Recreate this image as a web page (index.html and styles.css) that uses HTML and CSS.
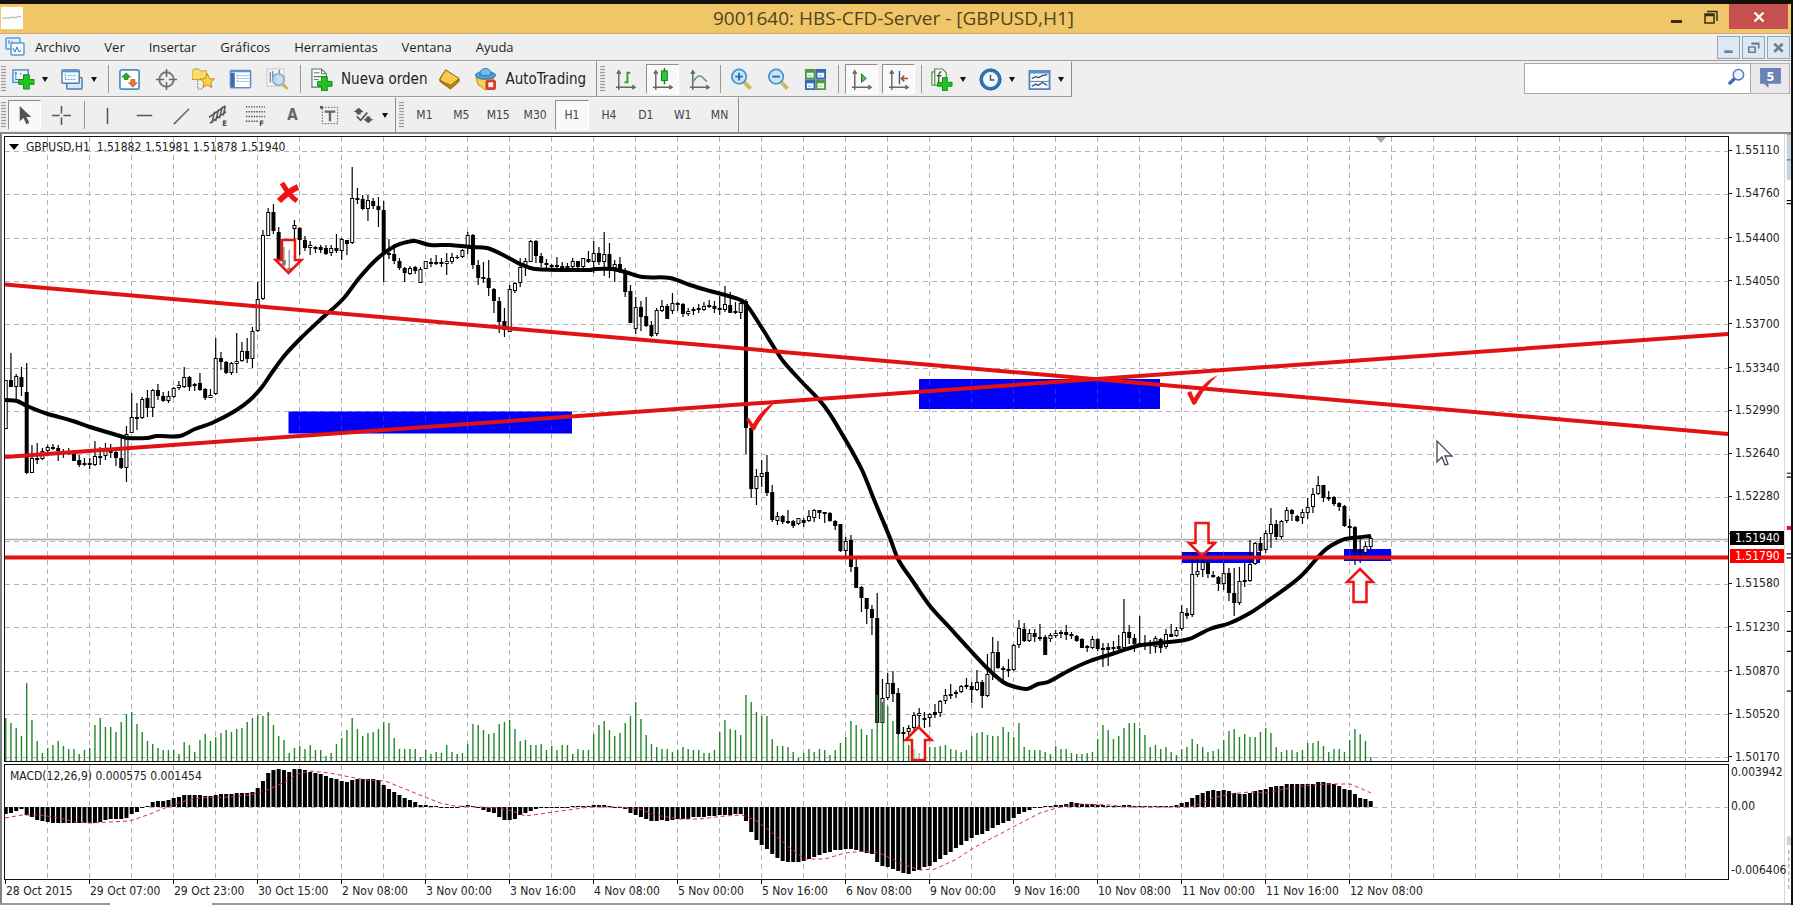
FILE: index.html
```html
<!DOCTYPE html>
<html lang="es">
<head>
<meta charset="utf-8">
<title>9001640: HBS-CFD-Server - [GBPUSD,H1]</title>
<link rel="stylesheet" href="styles.css">
</head>
<body>
<div class="window">
  <header class="titlebar">
    <span class="app-icon"><svg viewBox="0 0 22 22"><path d="M1 11h8l4-1 2 1 2-2 3 1" fill="none" stroke="#9aa" stroke-width="1"/></svg></span>
    <h1 class="title">9001640: HBS-CFD-Server - [GBPUSD,H1]</h1>
    <div class="win-controls">
      <button class="win-btn" aria-label="Minimizar"><svg width="12" height="22" viewBox="0 0 12 22"><path d="M0 15.5h11" stroke="#3a2c10" stroke-width="3"/></svg></button>
      <button class="win-btn" aria-label="Restaurar"><svg width="14" height="22" viewBox="0 0 14 22"><path d="M1 8h9v9H1zM1 9.500h9M3 5.500h10V15" fill="none" stroke="#3a2c10" stroke-width="1.500"/></svg></button>
      <button class="win-btn close" aria-label="Cerrar"><svg width="12" height="12" viewBox="0 0 12 12"><path d="M1.500 1.500l9 9M10.500 1.500l-9 9" stroke="#fff" stroke-width="2.200"/></svg></button>
    </div>
  </header>

  <nav class="menubar">
    <svg class="menu-icon" viewBox="0 0 20 20"><rect x="1" y="1" width="14" height="11" rx="1" fill="#e4f1fb" stroke="#5b9bd5" stroke-width="1.500"/><rect x="6" y="6" width="13" height="12" rx="1" fill="#f4faff" stroke="#5b9bd5" stroke-width="1.500"/><path d="M4 3v4M7 4v2M8 11l2 4 2-5 2 5 2-2" fill="none" stroke="#3c78b4"/></svg>
    <button>Archivo</button><button>Ver</button><button>Insertar</button><button>Gráficos</button><button>Herramientas</button><button>Ventana</button><button>Ayuda</button>
    <div class="mdi">
      <button aria-label="Minimizar gráfico"><svg viewBox="0 0 20 20"><path d="M6 14h8" stroke="#6c7f92" stroke-width="2.500"/></svg></button>
      <button aria-label="Restaurar gráfico"><svg viewBox="0 0 20 20"><path d="M5.500 9.500h6v5h-6zM8 6h7v5M5 9.500h7M8 6.500h7" fill="none" stroke="#6c7f92" stroke-width="1.600"/></svg></button>
      <button aria-label="Cerrar gráfico"><svg viewBox="0 0 20 20"><path d="M6 6.500l8 7.500M14 6.500l-8 7.500" stroke="#6c7f92" stroke-width="2.600"/></svg></button>
    </div>
  </nav>

  <div class="toolbar-row">
    <div class="toolbar">
      <span class="grip"></span>
      <button class="tb drop" aria-label="Nuevo gráfico"><svg viewBox="0 0 24 24"><rect x="1" y="2" width="16" height="13" fill="#eef7ff" stroke="#4a90c8" stroke-width="1.500"/><path d="M4 5v8M3 6l1-2 1 2M9 5v2M4 12h6" stroke="#4a7ea8" fill="none"/><path d="M12 7h6v5h5v5h-5v5h-6v-5H7v-5h5z" fill="#22c322" stroke="#0c8a14"/></svg></button>
      <button class="tb drop" aria-label="Perfiles"><svg viewBox="0 0 24 24"><rect x="6" y="10" width="16" height="12" rx="1" fill="#d5e8f8" stroke="#4a7fb0" stroke-width="1.500"/><rect x="1" y="2" width="18" height="14" rx="1" fill="#f4faff" stroke="#4a7fb0" stroke-width="1.500"/><path d="M1 3.500h18" stroke="#5b94c8" stroke-width="2"/><path d="M4.500 6v6M4 12h12M7 8h8" stroke="#6b9cc6" stroke-dasharray="2 1"/></svg></button>
      <span class="sep"></span>
      <button class="tb" aria-label="Observación del mercado"><svg viewBox="0 0 24 24"><rect x="2" y="2" width="20" height="20" rx="2" fill="#fff" stroke="#4a94c4" stroke-width="1.800"/><path d="M8.500 5l4.500 4.500h-2.500V12h-4V9.500H4z" fill="#22b422" stroke="#187818" stroke-width=".7"/><path d="M15.500 20L11 15.500h2.500V12h4v3.500H20z" fill="#f07830" stroke="#a84c18" stroke-width=".7"/></svg></button>
      <button class="tb" aria-label="Ventana de datos"><svg viewBox="0 0 24 24"><circle cx="12" cy="12" r="7.500" fill="none" stroke="#777" stroke-width="2"/><path d="M12 1v8.500M12 14.500V23M1 12h8.500M14.500 12H23" stroke="#666" stroke-width="1.600"/></svg></button>
      <button class="tb" aria-label="Navegador"><svg viewBox="0 0 24 24"><path d="M0 3l2-2h5l2 2h6v9H0z" fill="#f8dc70" stroke="#c49a28"/><path d="M6 13v9h5" fill="none" stroke="#555" stroke-dasharray="1.500 1.500"/><path d="M16 6l2.200 5 5.300.5-4 3.700 1.200 5.300-4.700-2.800-4.700 2.800 1.200-5.300-4-3.700 5.300-.5z" fill="#fbd24a" stroke="#b98a1c"/></svg></button>
      <button class="tb" aria-label="Terminal"><svg viewBox="0 0 24 24"><rect x="1.500" y="2.500" width="21" height="18" rx="1" fill="#fff" stroke="#5a90c8" stroke-width="1.600"/><path d="M1 3.500h22" stroke="#5a90c8" stroke-width="2"/><path d="M4 5v15" stroke="#3c6ca8" stroke-width="4"/><path d="M9 8h12M9 11h12M9 14h12" stroke="#a8c0dc"/><path d="M8.500 7v9" stroke="#345" stroke-dasharray="1 2"/></svg></button>
      <button class="tb" aria-label="Probador de estrategias"><svg viewBox="0 0 24 24"><rect x="1" y="1" width="18" height="18" fill="#f2f6fa" stroke="#a9b8c6" stroke-dasharray="3 1"/><path d="M4.500 4v11M7 3v7M10 6v8M14 2v6" stroke="#7d8a98" stroke-width="1.400"/><circle cx="13" cy="12" r="6" fill="#bcdcf4" fill-opacity=".85" stroke="#8cacc8" stroke-width="1.800"/><path d="M17.500 17l5 5" stroke="#d8b048" stroke-width="3"/></svg></button>
      <span class="sep wide"></span>
      <button class="tb text order"><svg viewBox="0 0 24 24"><path d="M2 1h10l5 5v14H2z" fill="#f8fbf8" stroke="#5a7a5a" stroke-width="1.200"/><path d="M12 1v5h5M4 5h6M4 9h9M4 12h5" fill="none" stroke="#777" stroke-width="1.200"/><path d="M12 9h6v5h5v5h-5v5h-6v-5H8v-5h4z" fill="#22c322" stroke="#0c8a14"/></svg>Nueva orden</button>
      <button class="tb" aria-label="MetaEditor"><svg viewBox="0 0 24 24"><path d="M8 2L22 11v3l-9 8L2 14v-3z" fill="#b97f14" stroke="#8c5c0c"/><path d="M8 2l14 9-9 7c-2-2-7-2-11-6z" fill="#f5cc52" stroke="#a06c14"/></svg></button>
      <button class="tb text auto"><svg viewBox="0 0 24 24"><path d="M2 9c4 4 15 4 19 0l-3 8-6 6-8-6z" fill="#f3cf52" stroke="#b98a1c"/><ellipse cx="12" cy="7.500" rx="10.500" ry="4" fill="#4ca0d8" stroke="#2c78ac"/><path d="M6 6.500c0-8 12-8 12 0-3 2-9 2-12 0z" fill="#74bce8" stroke="#2c78ac"/><rect x="12" y="12" width="11" height="11" rx="3" fill="#d04028"/><rect x="15" y="15" width="5" height="5" fill="#fff"/></svg>AutoTrading</button>
    </div>
    <div class="toolbar">
      <span class="grip"></span>
      <button class="tb" aria-label="Barras"><svg viewBox="0 0 24 24"><path d="M5 4v19M2 20h19M3 6l2-3 2 3M19 18l3 2-3 2" fill="none" stroke="#666" stroke-width="1.500"/><path d="M14 4v12M14 5h3M11 15h3" stroke="#28a032" stroke-width="2"/></svg></button>
      <button class="tb on" aria-label="Velas"><svg viewBox="0 0 24 24"><path d="M5 4v19M2 20h19M3 6l2-3 2 3M19 18l3 2-3 2" fill="none" stroke="#666" stroke-width="1.500"/><path d="M14 0v17" stroke="#187818" stroke-width="1.500"/><rect x="11" y="3" width="6" height="10" fill="#2cc83c" stroke="#187818"/></svg></button>
      <button class="tb" aria-label="Línea"><svg viewBox="0 0 24 24"><path d="M5 4v19M2 20h19M3 6l2-3 2 3M19 18l3 2-3 2" fill="none" stroke="#666" stroke-width="1.500"/><path d="M4 15c3-2 5-7 8-7s4 4 8 6" fill="none" stroke="#5c9c68" stroke-width="1.600"/></svg></button>
      <span class="sep"></span>
      <button class="tb" aria-label="Acercar"><svg viewBox="0 0 24 24"><path d="M15 15l6.500 6.500" stroke="#d0b860" stroke-width="4"/><circle cx="9.500" cy="9" r="7.500" fill="#c8e6fa" stroke="#4c94c8" stroke-width="1.800"/><path d="M5.500 9h8M9.500 5v8" stroke="#2870b0" stroke-width="2"/></svg></button>
      <button class="tb" aria-label="Alejar"><svg viewBox="0 0 24 24"><path d="M15 15l6.500 6.500" stroke="#d0b860" stroke-width="4"/><circle cx="9.500" cy="9" r="7.500" fill="#c8e6fa" stroke="#4c94c8" stroke-width="1.800"/><path d="M5.500 9h8" stroke="#2870b0" stroke-width="2"/></svg></button>
      <button class="tb" aria-label="Mosaico"><svg viewBox="0 0 24 24"><path d="M1 1h11v11H1zM12 12h11v11H12z" fill="#4c9c3c"/><path d="M12 1h11v11H12zM1 12h11v11H1z" fill="#3468b8"/><path d="M3 5h7v5H3zM14 5h7v5h-7zM3 16h7v5H3zM14 16h7v5h-7z" fill="#f2f7fb"/><path d="M4 8h4M15 8h4M4 19h4M15 19h4" stroke="#aac"/></svg></button>
      <span class="sep wide"></span>
      <button class="tb on" aria-label="Desplazamiento automático"><svg viewBox="0 0 24 24"><path d="M5 4v19M2 20h19M3 6l2-3 2 3M19 18l3 2-3 2" fill="none" stroke="#666" stroke-width="1.500"/><path d="M12 6l5 5-5 4z" fill="#4cc060" stroke="#187828"/></svg></button>
      <button class="tb on" aria-label="Margen del gráfico"><svg viewBox="0 0 24 24"><path d="M5 4v19M2 20h19M3 6l2-3 2 3M19 18l3 2-3 2" fill="none" stroke="#666" stroke-width="1.500"/><path d="M13 3v14" stroke="#2c5c98" stroke-width="1.500"/><path d="M22 11h-7M18 8l-3 3 3 3" fill="none" stroke="#a05038" stroke-width="1.600"/></svg></button>
      <span class="sep wide"></span>
      <button class="tb drop" aria-label="Indicadores"><svg viewBox="0 0 24 24"><path d="M5 1h8l4 4v13H5zM2 4h3M2 4v14h8" fill="#fafcfa" stroke="#4a8a4a" stroke-width="1.200"/><path d="M12 4c-3 0-3 3-3 12M7 8h5" fill="none" stroke="#555" stroke-width="1.500"/><path d="M13 10h5v5h5v4h-5v5h-5v-5H8v-4h5z" fill="#22c322" stroke="#0c8a14"/></svg></button>
      <button class="tb drop" aria-label="Periodicidad"><svg viewBox="0 0 24 24"><circle cx="12" cy="12" r="9.500" fill="#f4f9fd" stroke="#2c78b8" stroke-width="3.500"/><circle cx="12" cy="12" r="11" fill="none" stroke="#2c5c90" stroke-width="1"/><path d="M12 7v5.500h4" fill="none" stroke="#456" stroke-width="1.500"/></svg></button>
      <button class="tb drop last" aria-label="Plantillas"><svg viewBox="0 0 24 24"><rect x="1.500" y="3" width="21" height="19" fill="#f4f9fd" stroke="#4a80b8" stroke-width="1.800"/><path d="M1.500 4h21" stroke="#5c90c8" stroke-width="3.500"/><path d="M2 14h20" stroke="#4a80b8"/><path d="M4 11l4-2 3 1 4-2 5-1M4 19l4-2 3 1 4-3 5 3" fill="none" stroke="#445" stroke-width="1.300"/></svg></button>
    </div>
    <div class="search">
      <input type="text" aria-label="Buscar">
      <svg class="lens" viewBox="0 0 20 20"><circle cx="12" cy="7" r="5.500" fill="#eef4ff" stroke="#5c7cc0" stroke-width="1.600"/><path d="M8 11l-6 6" stroke="#4468b0" stroke-width="3.500"/></svg>
      <button class="chat" aria-label="Mensajes"><svg viewBox="0 0 24 24"><path d="M2 2h20v15H10v4l-4-4H2z" fill="#6c82b4"/><text x="12" y="14" text-anchor="middle" class="chat-num">5</text></svg></button>
    </div>
  </div>

  <div class="toolbar-row second">
    <div class="toolbar">
      <span class="grip"></span>
      <button class="tb on" aria-label="Cursor"><svg viewBox="0 0 24 24"><path d="M7 2v16l4-3.500 3 6.500 3-1.500-3-6h5z" fill="#555"/></svg></button>
      <button class="tb" aria-label="Cruz"><svg viewBox="0 0 24 24"><path d="M12 2v8M12 14v8M2 12h8M14 12h8" stroke="#555" stroke-width="1.600"/></svg></button>
      <span class="sep wide"></span>
      <button class="tb" aria-label="Línea vertical"><svg viewBox="0 0 24 24"><path d="M12 4v17" stroke="#555" stroke-width="1.600"/></svg></button>
      <button class="tb" aria-label="Línea horizontal"><svg viewBox="0 0 24 24"><path d="M4 12h16" stroke="#555" stroke-width="1.600"/></svg></button>
      <button class="tb" aria-label="Línea de tendencia"><svg viewBox="0 0 24 24"><path d="M4 21L20 5" stroke="#666" stroke-width="1.600"/></svg></button>
      <button class="tb" aria-label="Canal equidistante"><svg viewBox="0 0 24 24"><path d="M2 14L19 2M3 20L20 8M5 20l3-12M9 18l3-12M13 15l3-12M17 12l2-10" stroke="#555" stroke-width="1.600"/><text x="16" y="23" class="tag">E</text></svg></button>
      <button class="tb" aria-label="Fibonacci"><svg viewBox="0 0 24 24"><path d="M2 3h20M2 8h20M2 13h20M2 18h13" stroke="#555" stroke-width="1.500" stroke-dasharray="1.500 1.200"/><text x="16" y="23" class="tag">F</text></svg></button>
      <button class="tb letter" aria-label="Texto">A</button>
      <button class="tb" aria-label="Etiqueta"><svg viewBox="0 0 24 24"><rect x="4.500" y="3.500" width="16" height="17" fill="none" stroke="#555" stroke-dasharray="1.500 1.500"/><rect x="2" y="2" width="3" height="3" fill="#555"/><path d="M7 8h11M12.500 8v10" stroke="#666" stroke-width="2.400"/></svg></button>
      <button class="tb drop last" aria-label="Flechas"><svg viewBox="0 0 24 24"><path d="M7 4l5 4-3 1v2H5V9L2 8z" fill="#555"/><path d="M17 20l-5-4 3-1v-2h4v2l3 1z" fill="#555"/><path d="M5 13l4 4 7-8" fill="none" stroke="#555" stroke-width="1.800"/></svg></button>
    </div>
    <div class="toolbar">
      <span class="grip"></span>
      <div class="periods">
        <button>M1</button><button>M5</button><button>M15</button><button>M30</button><button class="on">H1</button><button>H4</button><button>D1</button><button>W1</button><button>MN</button>
      </div>
    </div>
  </div>

  <main class="workspace">
    <div class="chart">
      <section class="plot price">
        <svg id="price" viewBox="5 137 1723 624" preserveAspectRatio="none" role="img" aria-label="Gráfico GBPUSD H1"></svg>
        <p class="legend"><span class="arrow"></span><span>GBPUSD,H1&nbsp; 1.51882 1.51981 1.51878 1.51940</span></p>
      </section>
      <div class="axis price-axis" id="price-axis">
        <span class="tag-price now">1.51940</span><span class="tag-price level">1.51790</span>
      </div>
      <section class="plot macd">
        <svg id="macd" viewBox="5 765 1723 114" preserveAspectRatio="none" role="img" aria-label="MACD"></svg>
        <p class="legend macd-legend">MACD(12,26,9) 0.000575 0.001454</p>
      </section>
      <div class="axis macd-axis"><span>0.003942</span><span class="zero">0.00</span><span>-0.006406</span></div>
      <div class="times" id="times"></div>
    </div>
    <aside class="edge"><svg viewBox="0 0 7 773" preserveAspectRatio="none"><path d="M2 0h5v46H2z" fill="#c8d4e0"/><path d="M2 0h5M2 26h5" stroke="#567"/><path d="M2 67h5M2 70h5M2 341h5M2 345h5M2 422h5M2 426h5M2 480h5M2 500h5M2 520h5M2 560h5" stroke="#111" stroke-width="1.200"/><path d="M2 394h5v4H2z" fill="#e8102a"/><path d="M2 706h5v9H2z" fill="#c8d4e0"/><path d="M4.500 720v42" stroke="#888" stroke-dasharray="4 3"/></svg></aside>
  </main>
  <footer class="tabs"><span class="tab"></span></footer>
</div>
<script src="chart.js"></script>
</body>
</html>
```
FILE: styles.css
```css
* { box-sizing: border-box; }
body { margin: 0; background: #14100c; font-family: "DejaVu Sans Condensed", "Noto Sans", sans-serif; font-size: 12px; color: #222; }
button { font: inherit; color: inherit; background: none; border: 0; padding: 0; margin: 0; }
svg { display: block; }
.window { display: flex; flex-direction: column; height: 100vh; padding: 4px 2px 0 0; overflow: hidden; background: #14100c; }

.titlebar { display: grid; grid-template-columns: 1fr auto 1fr; height: 30px; flex: none; background: #efc769; border-bottom: 1px solid #cfa67a; align-items: start; }
.app-icon { width: 22px; height: 22px; background: #fff; margin: 3px 0 0 1px; }
.title { margin: 0; padding-right: 4px; font: 400 19px/29px "Open Sans", sans-serif; color: #54421c; }
.win-controls { display: flex; justify-content: flex-end; padding-right: 3px; }
.win-btn { width: 34px; height: 25px; display: flex; align-items: center; justify-content: center; }
.win-btn.close { width: 59px; background: #c75050; margin-left: 1px; }

.menubar { display: flex; align-items: center; height: 27px; flex: none; background: #efefef; border-bottom: 1px solid #9c9c9c; padding: 0 1px 0 5px; font: 13px/20px "Open Sans", sans-serif; gap: 24px; }
.menu-icon { width: 20px; height: 20px; margin-right: -14px; }
.mdi { display: flex; gap: 2px; margin-left: auto; }
.mdi button { width: 23px; height: 23px; background: #dce9f5; border: 1px solid #92a4b6; }
.mdi svg { width: 21px; height: 21px; }

.toolbar-row { display: flex; height: 36px; flex: none; background: #efefef; }
.toolbar-row.second { height: 35px; }
.toolbar { display: flex; align-items: center; border-right: 1px solid #8e8e8e; border-bottom: 1px solid #9c9c9c; border-top: 1px solid #f8f8f8; }
.toolbar + .toolbar { padding-left: 2px; }
.second .toolbar { border-bottom: 0; }
.grip { width: 5px; height: 26px; margin: 0 2px 0 1px; background: repeating-linear-gradient(#999 0 1px, #e6e6e6 1px 3px); }
.second .grip { margin-right: 0; }
.sep { width: 1px; height: 28px; background: #999; margin: 0 2px; }
.sep.wide { margin: 0 4px; }
.tb { width: 33px; height: 30px; margin: 0 2px; display: flex; align-items: center; justify-content: center; flex: none; }
.tb svg { width: 23px; height: 23px; flex: none; }
.tb.on, .periods .on { background: #f9f9f9; border: 1px solid #fff; border-top-color: #8e8e8e; border-left-color: #8e8e8e; }
.tb.drop { width: 45px; justify-content: space-between; padding: 0 7px 0 2px; }
.tb.drop::after { content: ""; border: 3px solid transparent; border-top: 5px solid #111; border-bottom: 0; }
.tb.drop.last { margin-right: 0; }
.tb.text { width: auto; gap: 8px; font-size: 15px; justify-content: flex-start; }
.tb.order { margin: 0 4px 0 5px; }
.tb.auto { margin-left: 6px; padding-right: 8px; }
.letter { font-size: 15px; font-weight: 600; color: #666; }
.tag { font: 700 8px "DejaVu Sans Condensed", sans-serif; fill: #444; }
.periods { display: grid; grid-template-columns: repeat(9, 1fr); width: 332px; margin-left: 2px; color: #444; }
.periods button { height: 30px; margin: 0 1px; }

.search { display: flex; position: relative; margin: 2px 1px 0 auto; width: 266px; height: 31px; }
.search input { flex: 1; min-width: 0; border: 1px solid #a8a8a8; background: #fff; }
.lens { position: absolute; right: 44px; top: 5px; width: 19px; height: 19px; }
.chat { width: 39px; border: 1px solid #b4b4b4; border-left: 0; background: #e9e9ec; display: flex; align-items: center; justify-content: center; }
.chat svg { width: 25px; height: 25px; }
.chat-num { font: 700 12px "DejaVu Sans Condensed", sans-serif; fill: #fff; }

.workspace { display: flex; flex: 1; min-height: 0; background: #fff; border-top: 2px solid #8a8a8a; border-left: 2px solid #808080; }
.chart { flex: 1; min-width: 0; display: grid; grid-template-columns: minmax(0, 1fr) 56px; grid-template-rows: minmax(0, 624fr) minmax(0, 114fr) 20px; row-gap: 4px; padding: 3px 0 0 3px; }
.plot { position: relative; outline: 1px solid #111; min-width: 0; min-height: 0; }
.plot svg { width: 100%; height: 100%; }
.legend { position: absolute; left: 4px; top: 2px; margin: 0; display: flex; align-items: center; gap: 7px; font-size: 12px; line-height: 16px; white-space: nowrap; }
.macd-legend { left: 5px; top: 3px; }
.arrow { border: 5px solid transparent; border-top: 6px solid #000; border-bottom: 0; }
.axis { position: relative; z-index: 1; line-height: 14px; white-space: nowrap; }
.price-axis .mark { position: absolute; left: 1px; display: flex; align-items: center; gap: 3px; margin-top: -8px; }
.price-axis .mark::before { content: ""; width: 3px; height: 1px; background: #111; }
.tag-price { position: absolute; left: 2px; right: 0; padding-left: 5px; color: #fff; line-height: 14px; background: #000; }
.now { top: 63.1%; }
.level { top: 66.1%; background: #f00; }
.macd-axis { padding: 0 0 2px 3px; display: flex; flex-direction: column; }
.zero { margin: 20px 0 auto; }
.times { grid-column: 1 / -1; display: grid; grid-template-columns: repeat(17, 84fr) 351fr; margin-top: -3px; line-height: 14px; white-space: nowrap; }
.times span { border-left: 1px solid #111; height: 4px; padding-top: 4px; }
.edge { width: 7px; flex: none; border-left: 1px solid #d8d8d8; background: #fff; }
.edge svg { width: 6px; height: 100%; }
.tabs { height: 2px; flex: none; background: #999; display: flex; }
.tab { width: 102px; margin-left: 110px; background: #fff; }

.grid { stroke: #b4b4b4; stroke-width: 1; stroke-dasharray: 5 4; fill: none; }
.wick { stroke: #000; stroke-width: 1.2; }
.bull { fill: #fff; stroke: #000; stroke-width: 1; }
.volume { fill: #23862a; }
.zone { fill: #0000fa; }
.average { fill: none; stroke: #000; stroke-width: 4; stroke-linejoin: round; }
.trend { stroke: #e01212; stroke-width: 4; fill: none; }
.signal { fill: none; stroke: #dc3038; stroke-width: 1; stroke-dasharray: 4 3; }
.mark-arrow { fill: #fff; fill-opacity: .5; stroke: #ee1414; stroke-width: 2.5; }
.tick { fill: none; stroke: #ee1414; }
```
FILE: chart.js
```js
// Candles: [high, body top, body bottom, low, rising]
const candles = [
[380,380,429,429,1],[353,380,387,387,0],[374,376,387,399,1],[367,377,387,396,0],[363,392,473,474,0],[445,458,473,473,1],[443,458,460,464,0],[448,451,459,460,1],[445,447,451,453,1],[444,447,449,450,0],
[445,448,451,461,0],[449,451,453,458,0],[448,451,453,455,1],[450,453,461,461,0],[455,460,465,467,0],[458,463,465,466,0],[458,463,465,469,0],[441,456,465,466,1],[447,456,458,465,0],[443,450,456,460,1],
[444,450,453,458,0],[448,452,458,466,0],[437,458,468,469,0],[426,434,468,482,1],[393,417,433,433,1],[403,417,419,430,0],[397,399,418,419,1],[390,398,408,417,0],[389,390,408,417,1],[384,390,396,400,0],
[392,396,401,402,0],[391,396,401,403,1],[387,388,397,398,1],[381,385,388,390,1],[367,377,387,388,1],[376,377,387,391,0],[383,384,386,391,0],[373,383,390,391,0],[388,389,398,400,0],[389,395,398,398,1],
[338,358,394,395,1],[352,358,362,370,0],[361,362,373,374,0],[362,363,373,375,1],[333,361,364,373,1],[342,351,361,362,1],[338,351,359,363,0],[327,331,359,368,1],[282,299,331,332,1],[230,235,299,300,1],
[208,212,236,236,1],[204,212,231,234,0],[227,232,259,260,0],[247,260,265,267,0],[250,268,270,272,0],[220,225,229,240,1],[227,228,240,255,0],[236,240,248,251,0],[241,245,248,255,1],[246,247,249,253,0],
[245,247,250,253,0],[245,248,254,255,0],[245,248,253,256,1],[234,248,251,253,0],[238,239,251,260,1],[240,240,244,255,0],[167,198,243,244,1],[188,198,200,204,0],[195,199,209,210,0],[195,200,209,221,1],
[198,201,206,209,0],[197,206,210,227,0],[201,210,254,282,0],[239,253,255,259,0],[244,254,261,264,0],[258,261,268,270,0],[267,268,273,282,0],[266,268,274,275,1],[266,267,271,274,0],[267,269,283,283,1],
[261,261,269,269,1],[258,262,264,267,0],[255,262,264,265,0],[258,262,264,267,0],[253,261,264,275,1],[253,257,262,264,1],[255,257,258,259,0],[249,250,257,258,1],[232,235,248,254,1],[234,235,265,269,0],
[260,265,278,285,0],[262,277,279,283,0],[260,278,288,296,0],[288,289,301,313,0],[297,301,322,333,0],[308,321,330,337,0],[285,289,332,332,1],[282,283,291,293,1],[258,267,283,287,1],[258,261,267,276,1],
[240,241,262,262,1],[240,241,256,263,0],[253,256,263,267,0],[259,263,265,269,0],[264,265,267,269,0],[257,265,267,268,0],[262,266,268,269,0],[263,266,269,269,0],[258,261,267,268,1],[261,261,267,268,0],
[258,258,267,268,1],[251,259,262,263,0],[241,253,262,273,1],[247,253,262,265,0],[232,254,262,276,1],[243,254,267,278,0],[260,264,268,282,1],[257,264,270,273,0],[268,273,292,297,0],[285,291,323,323,0],
[297,307,329,334,1],[301,307,317,331,0],[297,316,326,327,0],[321,325,336,337,0],[308,310,334,336,1],[300,306,311,312,1],[304,306,319,319,0],[293,303,311,314,1],[302,303,305,311,0],[303,304,314,317,0],
[308,311,314,316,1],[307,309,311,315,1],[304,308,310,313,0],[302,306,310,311,1],[300,305,307,308,0],[301,306,309,313,0],[296,308,310,315,0],[286,304,310,312,1],[292,305,313,313,0],[302,311,313,314,0],
[302,303,313,319,1],[299,301,428,454,0],[423,428,489,498,0],[469,476,489,505,1],[460,473,477,487,1],[455,472,493,496,0],[485,492,520,522,0],[512,516,521,525,1],[515,516,522,524,0],[510,521,523,524,0],
[520,521,526,528,0],[518,518,524,525,1],[518,520,523,527,0],[510,516,521,522,1],[509,510,518,522,1],[510,510,513,519,0],[512,512,514,523,0],[512,513,521,522,0],[520,521,526,530,0],[524,524,551,552,0],
[537,541,551,557,1],[535,540,567,572,0],[559,567,588,588,0],[586,587,598,612,0],[598,598,609,624,0],[605,609,618,635,0],[593,618,723,723,0],[679,698,723,723,1],[673,683,698,700,1],[671,683,694,702,0],
[688,693,734,735,0],[727,732,734,742,0],[725,728,732,738,1],[712,715,728,733,1],[708,713,716,727,1],[712,718,720,728,0],[713,714,718,727,1],[704,712,715,718,0],[700,701,713,717,1],[689,695,701,704,1],
[684,694,696,699,0],[690,692,694,698,1],[685,686,692,693,1],[678,685,687,689,0],[682,686,690,703,0],[670,682,690,691,1],[680,682,696,708,0],[654,674,696,697,1],[637,652,673,680,1],[641,652,668,669,0],
[666,668,670,684,0],[659,669,671,677,0],[644,645,670,671,1],[620,628,645,648,1],[623,629,641,642,0],[629,633,641,642,1],[629,633,637,642,0],[624,637,639,641,0],[635,637,655,655,0],[633,635,639,642,1],
[630,633,636,638,1],[630,632,634,638,0],[625,632,635,640,0],[632,634,636,639,0],[635,636,641,642,0],[638,639,648,648,0],[645,646,648,652,0],[636,639,648,649,1],[638,639,649,651,0],[643,648,650,667,0],
[643,647,650,666,0],[641,647,649,653,0],[635,646,649,652,0],[599,632,648,651,1],[625,632,638,644,0],[634,638,644,652,0],[616,643,645,646,0],[635,644,646,650,0],[640,643,646,654,0],[636,638,647,653,1],
[638,639,648,653,0],[629,634,647,649,1],[624,634,637,637,0],[627,630,636,637,1],[605,612,629,631,1],[608,613,616,619,0],[553,574,615,617,1],[555,571,575,577,1],[558,562,570,577,1],[560,562,574,578,0],
[571,575,577,578,0],[576,577,584,591,0],[563,573,584,590,1],[568,573,593,601,0],[568,593,603,616,0],[567,581,603,605,1],[562,580,582,587,0],[540,564,581,582,1],[542,543,564,565,1],[537,543,551,560,0],
[530,533,550,553,1],[508,524,534,548,1],[520,524,537,540,0],[520,521,537,539,1],[507,510,521,523,1],[509,510,514,521,0],[515,516,521,522,0],[509,512,518,524,1],[498,507,513,519,1],[488,494,507,513,1],
[476,485,494,495,1],[485,485,498,502,0],[491,497,499,501,0],[496,497,504,506,0],[502,503,507,511,0],[505,506,526,527,0],[519,526,528,540,0],[526,527,552,565,0],[538,551,553,563,0],[542,546,553,554,1],
[536,538,547,549,1]];

const volume = [43,38,33,25,78,41,20,8,13,16,20,15,12,12,7,11,13,36,43,34,34,29,39,47,49,37,29,20,17,13,11,11,11,7,19,16,9,21,27,20,24,28,31,29,32,33,39,43,46,45,49,36,25,21,8,13,15,12,16,11,11,5,8,17,23,31,43,32,25,28,29,32,39,38,23,12,12,12,12,4,11,7,9,8,16,9,7,8,17,37,36,31,27,28,37,39,41,32,20,21,16,16,17,11,15,11,16,16,7,12,11,11,27,
36,40,31,25,28,38,45,59,42,26,17,14,12,12,9,11,14,12,11,11,8,8,11,29,41,32,31,26,66,59,49,45,45,22,15,15,14,9,3,8,12,9,12,11,6,11,18,24,40,36,32,26,32,66,59,55,40,26,20,16,12,8,12,14,14,15,16,12,11,9,11,25,28,29,26,25,25,34,29,24,38,14,11,11,11,9,7,15,12,12,8,7,7,8,9,22,36,31,22,25,33,38,38,33,26,14,16,12,14,9,6,
12,14,22,17,14,9,10,12,21,30,32,24,27,24,24,29,33,28,14,9,11,11,9,11,18,18,20,15,9,12,12,9,21,32,27,20,4];

const macd = [-7,-6,-4,-2,-8,-10,-13,-14,-15,-16,-16,-16,-16,-16,-16,-16,-16,-16,-15,-13,-12,-12,-12,-11,-7,-5,-1,1,5,6,6,7,9,10,12,12,12,12,11,11,12,13,13,13,14,14,14,15,19,26,34,37,38,37,35,38,38,37,35,34,33,31,29,28,26,25,27,28,28,28,28,27,22,18,15,12,9,7,5,2,2,1,1,-1,-1,-1,-1,1,2,1,-1,-3,-5,-6,-10,-13,-13,-12,-8,-6,-4,-2,-1,-1,-1,-1,-1,-1,1,1,1,1,2,2,2,1,-1,-1,
-2,-6,-8,-10,-12,-14,-14,-13,-14,-13,-12,-12,-12,-10,-10,-10,-9,-9,-8,-8,-8,-7,-7,-14,-25,-33,-38,-42,-47,-51,-54,-55,-55,-55,-54,-52,-50,-48,-46,-45,-43,-43,-42,-42,-43,-45,-46,-47,-55,-59,-60,-62,-64,-66,-67,-64,-63,-60,-59,-55,-52,-48,-45,-41,-38,-34,-31,-28,-27,-24,-21,-18,-16,-14,-11,-7,-5,-3,-1,-1,1,1,2,2,3,5,4,3,3,3,2,2,1,1,1,2,2,1,1,1,1,1,1,1,1,2,
4,5,9,12,14,16,17,16,17,16,14,13,13,14,16,17,18,20,21,21,23,23,23,23,23,23,25,25,24,23,21,18,17,13,9,8,6];

const average = "5,400 17,401 27,406 45,413 73,421 90,427 120,436 127,438 147,438 157,436 180,436 195,429 212,423 235,411 250,400 262,387 273,371 285,355 300,339 320,320 343,299 360,277 378,258 395,246 407,242 415,241 430,245 450,245 470,247 487,248 505,256 520,264 535,269 590,270 595,269 612,269 625,272 643,277 670,278 690,285 710,291 735,298 745,303 760,325 775,349 783,361 800,380 825,407 845,439 862,470 875,502 890,538 898,559 912,580 930,606 950,628 970,650 988,669 1003,682 1012,686 1027,689 1038,684 1048,682 1070,670 1090,661 1112,654 1137,646 1160,643 1185,640 1192,638 1210,629 1230,623 1250,613 1265,603 1300,577 1325,550 1342,540 1352,538 1371,536";
const signal = "5,818 22,815 40,815 60,818 75,822 90,823 110,822 130,821 150,814 170,806 185,801 200,798 230,797 250,795 265,791 285,782 298,774 310,771 330,773 345,776 365,780 385,781 405,789 425,797 440,803 455,806 480,807 500,808 515,812 525,816 540,814 560,811 590,807 620,807 640,809 655,815 680,819 700,819 725,816 742,815 755,820 770,831 790,848 805,859 825,859 845,853 865,851 880,853 900,863 920,870 935,869 955,860 975,847 1000,834 1015,826 1040,813 1060,807 1080,804 1110,805 1130,807 1190,807 1200,804 1213,798 1230,794 1250,792 1265,793 1290,788 1310,785 1330,784 1350,784 1362,789 1371,793";

const STEP = 5.25, FIRST = 5.7, FLOOR = 761, ZERO = 807;
const barX = i => FIRST + STEP * i;

// Catmull-Rom curve through the listed points
function curve(list) {
  const p = list.split(" ").map(s => s.split(",").map(Number));
  let d = `M${p[0]}`;
  for (let i = 0; i < p.length - 1; i++) {
    const a = p[Math.max(i - 1, 0)], b = p[i], c = p[i + 1], e = p[Math.min(i + 2, p.length - 1)];
    const w = (c[0] - b[0]) / 3;
    const s1 = (c[1] - a[1]) / (c[0] - a[0]), s2 = (e[1] - b[1]) / (e[0] - b[0]);
    d += `C${b[0] + w} ${b[1] + w * s1} ${c[0] - w} ${c[1] - w * s2} ${c[0]} ${c[1]}`;
  }
  return d;
}

function gridLines(top, bottom) {
  let d = "";
  for (let k = 1; k <= 40; k++) d += `M${Math.round(FIRST + 42 * k) - 0.5} ${top}V${bottom}`;
  return d;
}

const rows = Array.from({ length: 15 }, (_, k) => Math.round(151 + 43.3 * k) + 0.5);
const rowPath = rows.map(y => `M5 ${y}H1728`).join("");

const candleMarkup = candles.map(([high, top, bottom, low, rising], i) => {
  const x = barX(i);
  const body = rising
    ? `<rect class="bull" x="${x - 1.5}" y="${top + 0.5}" width="3" height="${Math.max(bottom - top - 1, 1)}"/>`
    : `<rect x="${x - 2}" y="${top}" width="4" height="${Math.max(bottom - top, 1)}"/>`;
  return `<path class="wick" d="M${x} ${high}V${low}"/>${body}`;
}).join("");

const volumeMarkup = volume.map((h, i) =>
  `<rect class="volume" x="${barX(i) - 0.7}" y="${FLOOR - h}" width="1.4" height="${h}"/>`).join("");

const zones = [[288.5, 411.5, 283.5, 22], [919, 379, 241, 30], [1182, 552, 78, 11], [1344, 549, 47, 12]]
  .map(([x, y, w, h]) => `<rect class="zone" x="${x}" y="${y}" width="${w}" height="${h}"/>`).join("");

const arrow = (x, y, dir) =>
  `<path class="mark-arrow" transform="translate(${x} ${y}) scale(1 ${dir})" d="M0 0L13 -13H6.500V-33H-6.500V-13H-13Z"/>`;

document.getElementById("price").innerHTML = `
  <path class="grid" d="${rowPath}${gridLines(137, 761)}"/>
  <path d="M5 539.5H1728" stroke="#aaa" stroke-width="1.500"/>
  ${zones}
  <path class="grid" d="${gridLines(137, 761)}" opacity=".25"/>
  ${candleMarkup}${volumeMarkup}
  <path class="average" d="${curve(average)}"/>
  <path class="trend" d="M5 284.500L1728 434M5 457L1728 334M5 557.500H1728"/>
  ${arrow(288.5, 273, 1)}${arrow(1202, 556, 1)}${arrow(918.5, 727, -1)}${arrow(1360, 569, -1)}
  <path class="tick" stroke-width="5" d="M282 183C286 190 291 197 297 201"/>
  <path class="tick" stroke-width="6" d="M298 187C291 190 284 196 279 201"/>
  <path fill="#ee1414" d="M746 419l3-1 4 6C759 413 767 406 775 402C767 411 759 421 755 430h-3zM1187 393l4-2 3 7C1201 386 1209 379 1218 375C1209 383 1201 394 1196 404l-3 1z"/>
  <path fill="#aaa" d="M1376 137h10l-5 6z"/>
  <path d="M1437 441v21l5-5 3 8 3-1-3-8h7z" fill="#fff" stroke="#445" stroke-width="1.300"/>`;

document.getElementById("macd").innerHTML = `
  <path class="grid" d="M5 807.500H1728${gridLines(765, 879)}"/>
  ${macd.map((v, i) => `<rect x="${barX(i) - 2}" y="${v > 0 ? ZERO - v : ZERO}" width="4" height="${Math.abs(v)}"/>`).join("")}
  <polyline class="signal" points="${signal}"/>`;

const prices = ["1.55110", "1.54760", "1.54400", "1.54050", "1.53700", "1.53340", "1.52990", "1.52640", "1.52280", "", "1.51580", "1.51230", "1.50870", "1.50520", "1.50170"];
document.getElementById("price-axis").insertAdjacentHTML("afterbegin", prices.map((p, k) =>
  `<span class="mark" style="top:${((rows[k] - 137) / 6.24).toFixed(2)}%">${p}</span>`).join(""));

const times = ["28 Oct 2015", "29 Oct 07:00", "29 Oct 23:00", "30 Oct 15:00", "2 Nov 08:00", "3 Nov 00:00", "3 Nov 16:00", "4 Nov 08:00", "5 Nov 00:00", "5 Nov 16:00", "6 Nov 08:00", "9 Nov 00:00", "9 Nov 16:00", "10 Nov 08:00", "11 Nov 00:00", "11 Nov 16:00", "12 Nov 08:00"];
document.getElementById("times").innerHTML = times.map(t => `<span>${t}</span>`).join("");
```
